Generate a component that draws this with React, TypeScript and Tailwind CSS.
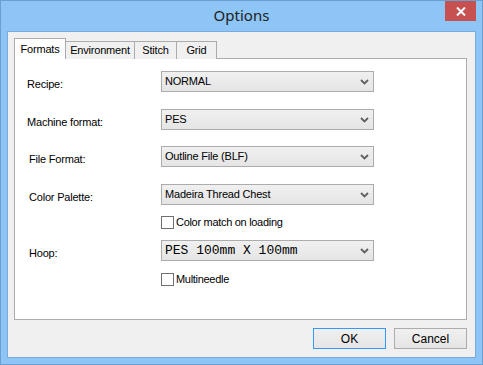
import React from 'react';

const Chevron: React.FC = () => (
  <svg width="9" height="6" viewBox="0 0 9 6" className="shrink-0">
    <path d="M1 1 L4.5 4.5 L8 1" fill="none" stroke="#606060" strokeWidth="1.8" />
  </svg>
);

const Combo: React.FC<{ value: string; mono?: boolean }> = ({ value, mono }) => (
  <div className="flex items-center justify-between w-[213px] h-[21px] border border-[#acacac] bg-gradient-to-b from-[#f0f0f0] to-[#e5e5e5] pl-[3px] pr-[4px]">
    <span
      className={
        mono
          ? "font-['Liberation_Mono',monospace] text-[13px] text-black"
          : "font-['Liberation_Sans',Arial,sans-serif] text-[11px] tracking-[-0.2px] text-black"
      }
    >
      {value}
    </span>
    <Chevron />
  </div>
);

const Check: React.FC<{ label: string }> = ({ label }) => (
  <div className="flex items-center gap-[2px] ml-[134px] h-[13px]">
    <div className="w-[13px] h-[13px] border border-[#707070] bg-white" />
    <span className="font-['Liberation_Sans',Arial,sans-serif] text-[11px] leading-[13px] tracking-[-0.3px] text-black">
      {label}
    </span>
  </div>
);

const Row: React.FC<{ label: string; value: string; mono?: boolean; nudge?: boolean; className?: string }> = ({
  label,
  value,
  mono,
  nudge,
  className,
}) => (
  <div className={`flex items-center h-[21px] ${className ?? ''}`}>
    <span
      className={`w-[134px] pt-[4px] leading-[14px] font-['Liberation_Sans',Arial,sans-serif] text-[11px] tracking-[-0.2px] text-black ${
        nudge ? 'pl-[2px]' : ''
      }`}
    >
      {label}
    </span>
    <Combo value={value} mono={mono} />
  </div>
);

export default function App() {
  const tabs = [
    { name: 'Environment', w: 'w-[70px]' },
    { name: 'Stitch', w: 'w-[43px]' },
    { name: 'Grid', w: 'w-[41px]' },
  ];

  return (
    <div className="w-[483px] h-[365px] bg-[#8cc5f6] border border-[#6a9fd2] flex flex-col relative font-['Liberation_Sans',Arial,sans-serif]">
      {/* Title bar */}
      <div className="h-[30px] flex items-center justify-center">
        <span className="font-['Noto_Sans','Open_Sans',sans-serif] text-[15px] text-[#222] pb-[1px]">Options</span>
      </div>
      <div className="absolute top-0 right-[6px] w-[31px] h-[20px] bg-[#c75050] flex items-center justify-center">
        <svg width="10" height="9" viewBox="0 0 10 9">
          <path d="M1 0.5 L9 8.5 M9 0.5 L1 8.5" stroke="white" strokeWidth="2" />
        </svg>
      </div>

      {/* Client area */}
      <div className="mx-[6px] h-[327px] bg-[#f0f0f0] border border-[#79acdb] flex flex-col pl-[6px] pr-[8px] pt-[6px]">
        {/* Tabs */}
        <div className="flex items-end h-[21px] relative z-10">
          <div className="w-[52px] h-[21px] bg-white border border-b-0 border-[#acacac] flex items-start justify-center pt-[2px] text-[11px] tracking-[-0.2px] text-black">
            Formats
          </div>
          {tabs.map((t) => (
            <div
              key={t.name}
              className={`${t.w} h-[18px] -ml-px first:ml-0 bg-[#f0f0f0] border border-b-0 border-[#acacac] flex items-center justify-center text-[11px] tracking-[-0.2px] text-black`}
            >
              {t.name}
            </div>
          ))}
        </div>

        {/* Panel */}
        <div className="h-[262px] -mt-px bg-white border border-[#acacac] flex flex-col pl-[12px] pt-[12px]">
          <Row label="Recipe:" value="NORMAL" />
          <Row label="Machine format:" value="PES" className="mt-[17px]" />
          <Row label="File Format:" value="Outline File (BLF)" nudge className="mt-[16px]" />
          <Row label="Color Palette:" value="Madeira Thread Chest" nudge className="mt-[17px]" />
          <div className="mt-[11px]">
            <Check label="Color match on loading" />
          </div>
          <Row label="Hoop:" value="PES 100mm X 100mm" mono nudge className="mt-[11px]" />
          <div className="mt-[12px]">
            <Check label="Multineedle" />
          </div>
        </div>

        {/* Buttons */}
        <div className="flex justify-end gap-[8px] mt-[8px]">
          <button className="w-[73px] h-[21px] border border-[#3399ff] bg-gradient-to-b from-[#f0f0f0] to-[#e5e5e5] text-[12px] text-black">
            OK
          </button>
          <button className="w-[73px] h-[21px] border border-[#acacac] bg-gradient-to-b from-[#f0f0f0] to-[#e5e5e5] text-[12px] text-black">
            Cancel
          </button>
        </div>
      </div>
    </div>
  );
}
